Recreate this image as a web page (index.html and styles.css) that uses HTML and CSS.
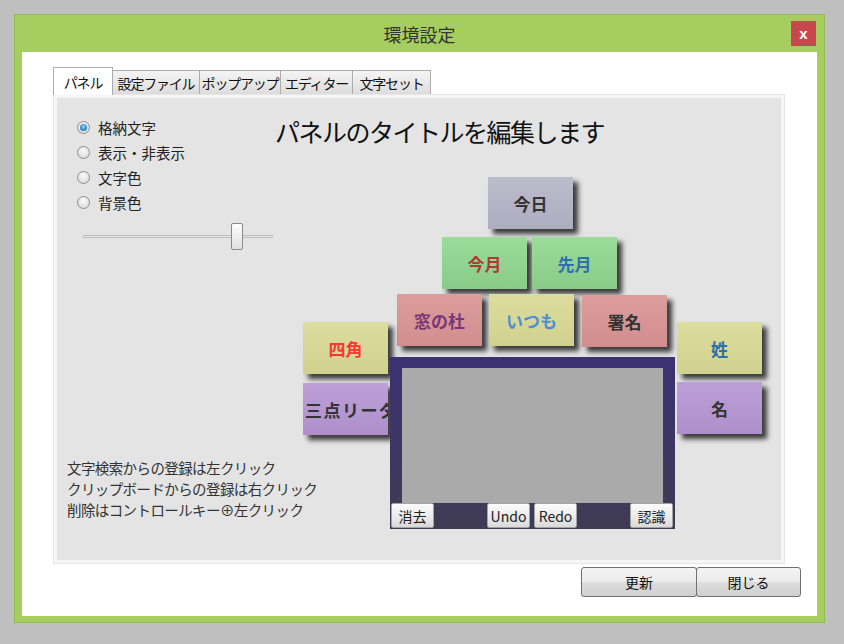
FILE: index.html
```html
<!DOCTYPE html>
<html lang="ja">
<head>
    <meta charset="UTF-8">
    <title>環境設定</title>
    <link rel="stylesheet" href="styles.css">
</head>
<body>
<div class="window">
    <div class="titlebar">
        <span class="title">環境設定</span>
        <button class="close-button">x</button>
    </div>
    <div class="client">
        <div class="tabs">
            <div class="tab tab-panel-w selected">パネル</div>
            <div class="tab tab-file-w">設定ファイル</div>
            <div class="tab tab-popup-w">ポップアップ</div>
            <div class="tab tab-editor-w">エディター</div>
            <div class="tab tab-charset-w">文字セット</div>
        </div>
        <div class="tab-panel">
            <div class="tab-body">
                <div class="left-col">
                    <div class="radio-group">
                        <label class="radio checked"><span class="radio-dot"></span>格納文字</label>
                        <label class="radio"><span class="radio-dot"></span>表示・非表示</label>
                        <label class="radio"><span class="radio-dot"></span>文字色</label>
                        <label class="radio"><span class="radio-dot"></span>背景色</label>
                    </div>
                    <div class="slider">
                        <div class="slider-track"></div>
                        <div class="slider-thumb"></div>
                    </div>
                    <div class="hint">
                        文字検索からの登録は左クリック<br>
                        クリップボードからの登録は右クリック<br>
                        削除はコントロールキー⊕左クリック
                    </div>
                </div>
                <div class="right-col">
                    <h1 class="panel-title">パネルのタイトルを編集します</h1>
                    <div class="canvas">
                        <div class="tile tile-gray ink-dark k-today">今日</div>
                        <div class="tile tile-green ink-red k-month">今月</div>
                        <div class="tile tile-green ink-blue k-lastmonth">先月</div>
                        <div class="tile tile-pink ink-purple k-madonomori">窓の杜</div>
                        <div class="tile tile-yellow ink-lightblue k-itsumo">いつも</div>
                        <div class="tile tile-pink ink-dark k-sign">署名</div>
                        <div class="tile tile-yellow ink-brightred k-square">四角</div>
                        <div class="tile tile-purple ink-dark tile-wide k-leader">三点リーダー</div>
                        <div class="tile tile-yellow ink-blue k-sei">姓</div>
                        <div class="tile tile-purple ink-dark k-mei">名</div>

                        <div class="pad">
                            <div class="pad-area"></div>
                            <div class="pad-buttons">
                                <button class="pad-button">消去</button>
                                <span class="pad-spacer"></span>
                                <button class="pad-button">Undo</button>
                                <button class="pad-button">Redo</button>
                                <span class="pad-spacer"></span>
                                <button class="pad-button">認識</button>
                            </div>
                        </div>
                    </div>
                </div>
            </div>
        </div>
        <div class="footer">
            <button class="footer-button update">更新</button>
            <button class="footer-button close">閉じる</button>
        </div>
    </div>
</div>
</body>
</html>
```

FILE: styles.css
```css
body {
    margin: 0;
    background-color: #bfbfbf;
    font-family: "Noto Sans CJK JP", "Liberation Sans", sans-serif;
}

.window {
    margin: 14px;
    width: 811px;
    height: 609px;
    box-sizing: border-box;
    background-color: #a6cd60;
    border: 1px solid #94bb50;
    padding: 0 7px 6px;
    display: flex;
    flex-direction: column;
}

.titlebar {
    height: 37px;
    position: relative;
    display: flex;
    align-items: center;
    justify-content: center;
}

.title {
    font-size: 18px;
    line-height: 1;
    color: #333;
}

.close-button {
    position: absolute;
    top: 6px;
    right: 1px;
    width: 25px;
    height: 25px;
    padding: 0;
    border: none;
    background-color: #c8474e;
    color: white;
    font-family: "Liberation Sans", sans-serif;
    font-weight: bold;
    font-size: 15px;
    line-height: 23px;
}

.client {
    flex: 1;
    background-color: #fff;
    padding: 15px 32px 0 31px;
    display: flex;
    flex-direction: column;
}

/* tabs */
.tabs {
    display: flex;
    align-items: flex-end;
    height: 27px;
    position: relative;
    z-index: 1;
}

.tab {
    height: 24px;
    box-sizing: border-box;
    border: 1px solid #acacac;
    border-bottom: none;
    margin-left: -1px;
    background: linear-gradient(#f4f4f4, #e9e9e9 50%, #dcdcdc);
    display: flex;
    align-items: center;
    justify-content: center;
    white-space: nowrap;
    font-size: 14px;
    letter-spacing: -1.2px;
    color: #111;
}

.tab.selected {
    height: 28px;
    margin-left: 0;
    margin-bottom: -1px;
    background: #fff;
}

.tab-panel-w { width: 60px; }
.tab-file-w { width: 88px; }
.tab-popup-w { width: 82px; }
.tab-editor-w { width: 73px; }
.tab-charset-w { width: 79px; }

.tab-panel {
    height: 470px;
    box-sizing: border-box;
    border: 1px solid #e6e6e6;
    padding: 3px;
    background-color: #f6f6f6;
}

.tab-body {
    height: 100%;
    background-color: #e4e4e4;
    display: grid;
    grid-template-columns: 218px 1fr;
}

/* left column */
.left-col {
    display: flex;
    flex-direction: column;
    padding: 17px 0 40px 10px;
}

.radio-group {
    padding-left: 10px;
}

.radio {
    display: flex;
    align-items: center;
    gap: 8px;
    height: 25px;
    font-size: 14.5px;
    color: #222;
}

.radio-dot {
    position: relative;
    width: 13px;
    height: 13px;
    box-sizing: border-box;
    border-radius: 50%;
    border: 1px solid #8e8f8f;
    background: radial-gradient(circle at 50% 35%, #fbfbfb, #d2d2d2);
}

.radio.checked .radio-dot::after {
    content: "";
    position: absolute;
    left: 2px;
    top: 2px;
    width: 7px;
    height: 7px;
    border-radius: 50%;
    background: radial-gradient(circle at 50% 40%, #9fd8f8, #2b86c8 60%, #1c5e9c);
}

.slider {
    position: relative;
    width: 190px;
    height: 27px;
    margin: 8px 0 0 16px;
}

.slider-track {
    position: absolute;
    left: 0;
    right: 0;
    top: 12px;
    height: 1px;
    background-color: #e8e8e8;
    border: 1px solid #bcbcbc;
    border-radius: 1px;
}

.slider-thumb {
    position: absolute;
    left: 148px;
    top: 0;
    width: 12px;
    height: 27px;
    box-sizing: border-box;
    border: 1px solid #8a8a8a;
    border-radius: 2px;
    background: linear-gradient(#fdfdfd, #e0e0e0);
}

.hint {
    margin-top: auto;
    font-size: 14.5px;
    line-height: 21px;
    letter-spacing: -0.6px;
    color: #333;
    white-space: nowrap;
}

/* right column */
.right-col {
    display: flex;
    flex-direction: column;
}

.panel-title {
    margin: 18px 0 0;
    font-size: 25px;
    font-weight: normal;
    line-height: 30px;
    letter-spacing: -1.5px;
    color: #111;
}

.canvas {
    position: relative;
    flex: 1;
}

.tile {
    position: absolute;
    width: 85px;
    height: 52px;
    display: flex;
    align-items: center;
    justify-content: center;
    overflow: hidden;
    white-space: nowrap;
    font-size: 17px;
    font-weight: bold;
    box-shadow: 5px 5px 5px rgba(0, 0, 0, 0.75);
}

.tile-wide {
    justify-content: flex-start;
    padding-left: 2px;
    box-sizing: border-box;
    letter-spacing: 1.5px;
}

.tile-gray { background: linear-gradient(#bcbccd, #adadbf); }
.tile-green { background: linear-gradient(#9bdc9b, #8acb8a); }
.tile-pink { background: linear-gradient(#dc9d9d, #d28e8e); }
.tile-yellow { background: linear-gradient(#dcdc9e, #d1d18f); }
.tile-purple { background: linear-gradient(#bd9fd8, #ae8fcb); }

.ink-dark { color: #333; }
.ink-red { color: #b23a36; }
.ink-blue { color: #2f6fae; }
.ink-purple { color: #7a3676; }
.ink-lightblue { color: #4d8fd6; }
.ink-brightred { color: #fb3434; }

.k-today { left: 213px; top: 31px; }
.k-month { left: 167px; top: 91px; }
.k-lastmonth { left: 257px; top: 91px; }
.k-madonomori { left: 122px; top: 148px; }
.k-itsumo { left: 214px; top: 148px; }
.k-sign { left: 307px; top: 149px; }
.k-square { left: 28px; top: 176px; }
.k-leader { left: 28px; top: 237px; }
.k-sei { left: 402px; top: 176px; }
.k-mei { left: 402px; top: 236px; }

/* handwriting pad */
.pad {
    position: absolute;
    left: 115px;
    top: 211px;
    width: 285px;
    height: 172px;
    box-sizing: border-box;
    padding-top: 11px;
    background: linear-gradient(#3c3173, #3f3b53);
    display: flex;
    flex-direction: column;
}

.pad-area {
    height: 135px;
    margin: 0 12px;
    background-color: #aaaaaa;
}

.pad-buttons {
    display: flex;
    height: 25px;
    padding: 0 2px 0 1px;
}

.pad-button {
    width: 43px;
    height: 25px;
    padding: 0;
    border: 1px solid #a3a3a3;
    border-radius: 2px;
    background: linear-gradient(#fcfcfc, #ececec 50%, #dadada);
    font-family: inherit;
    font-size: 14px;
    line-height: 1;
    color: #222;
}

.pad-button + .pad-button {
    margin-left: 4px;
}

.pad-spacer {
    flex: 1;
}

/* footer */
.footer {
    display: flex;
    justify-content: flex-end;
    margin: 3px -16px 0 0;
}

.footer-button {
    height: 30px;
    padding: 0;
    border: 1px solid #707070;
    border-radius: 3px;
    background: linear-gradient(#f3f3f3, #ebebeb 50%, #dddddd 50%, #d0d0d0);
    font-family: inherit;
    font-size: 14px;
    color: #111;
}

.footer-button.update {
    width: 116px;
}

.footer-button.close {
    width: 105px;
    margin-left: -1px;
}
```
